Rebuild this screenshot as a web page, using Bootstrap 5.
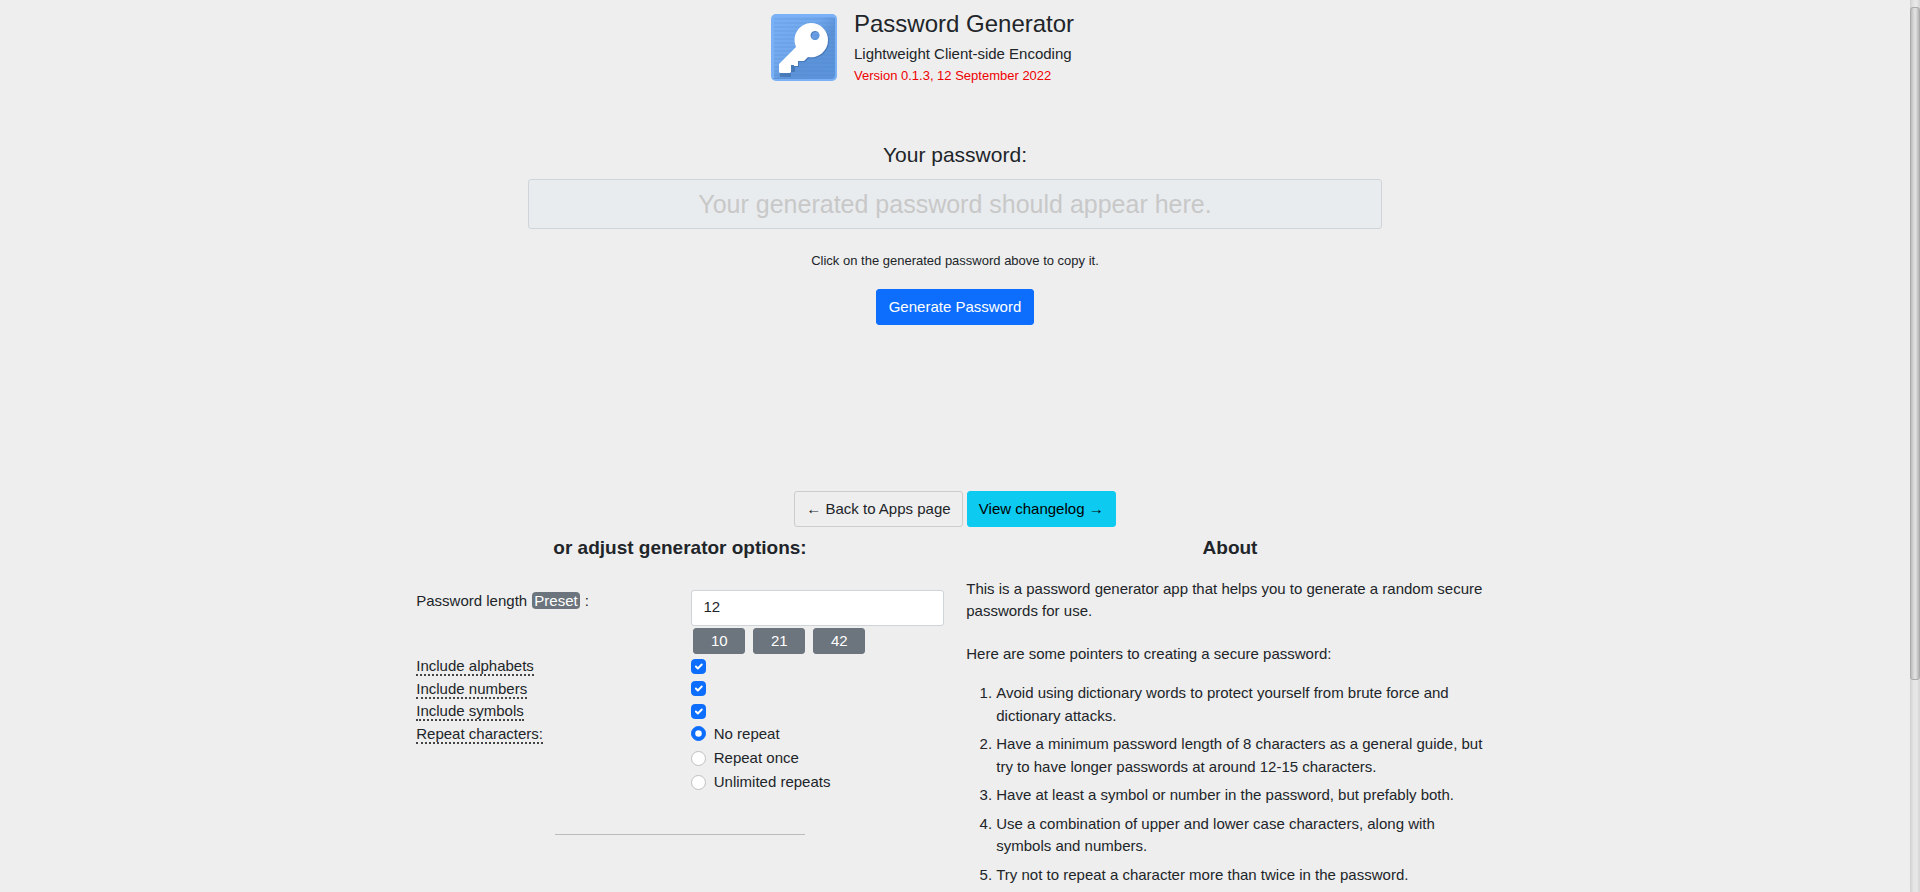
<!DOCTYPE html>
<html lang="en">
<head>
<meta charset="utf-8">
<meta name="viewport" content="width=device-width, initial-scale=1">
<title>Password Generator</title>
<link href="https://cdn.jsdelivr.net/npm/bootstrap@5.3.0/dist/css/bootstrap.min.css" rel="stylesheet">
<style>
  :root { font-size: 15px; }
  body { font-family: "Liberation Sans", Arial, sans-serif; background: #eee; padding-right: 10px; overflow-x: hidden; }
  .btn, .form-control { border-radius: 3px; }
  .form-control { border-color: #ced4da; }
  .form-check-input:not(:checked) { border-color: #bfbfbf; }
  .page-wrap { max-width: 1100px; }
  .app-head { width: 368px; max-width: 100%; gap: 16px; padding-top: 10px; }
  .app-logo { width: 67px; height: 68px; flex: none; margin-top: 4px; }
  .app-title { font-size: 24px; line-height: 28px; margin: 0; }
  .app-sub { line-height: 22px; margin-top: 5px; }
  .app-version { font-size: 13px; line-height: 22px; color: #e00; }
  .pw-area { padding-top: 56px; min-height: 404px; }
  .pw-label { font-size: 21px; line-height: 24px; margin-bottom: 12px; }
  .pw-box { max-width: 854px; height: 50px; font-size: 25px; border-color: #ced4da; }
  .pw-box:disabled, .pw-box[readonly] { background: #e9ecef; }
  .pw-box::placeholder { color: #c8c8c8; opacity: 1; }
  .pw-hint { font-size: 13px; line-height: 20px; margin: 22px 0 18px; }
  .btn-back { border-color: #ccc; color: #212529; }
  .sect-title { font-size: 19px; line-height: 22px; font-weight: 700; text-align: center; margin: 10px 0 0; }
  .options { margin-top: 31px; }
  .tag-preset { background: #6c757d; color: #fff; border-radius: 4px; padding: 0 2px; margin: 0 1px; }
  .preset-row { gap: 8px; padding: 2px 2px 1px; }
  .btn-preset { --bs-btn-padding-y: 1px; width: 52px; }
  .hinted { text-decoration: none; border-bottom: 2px dotted #444; line-height: 16px; display: inline-block; cursor: help; }
  .opt-check { display: block; }
  .short-rule { width: 250px; margin: 38px auto 0; opacity: .25; }
  .about { margin-top: 19px; }
  .about p { margin-bottom: 20px; }
  .about ol { padding-left: 30px; margin-bottom: 0; }
  .about p + ol { margin-top: -3px; }
  .about li { margin-bottom: 6px; }
  .about li:last-child { margin-bottom: 0; }
  .scroll-track { width: 10px; background: linear-gradient(90deg, #d0d0d0, #e4e4e4 35%, #e8e8e8 65%, #d4d4d4); padding-top: 7px; }
  .scroll-thumb { height: 76%; border: 1px solid #aaa; border-radius: 3px; background: linear-gradient(90deg, #bbb, #ddd 40%, #e0e0e0 60%, #b4b4b4); }
</style>
</head>
<body>
<div class="container-fluid page-wrap p-0">
  <header class="app-head d-flex mx-auto">
    <svg class="app-logo" viewBox="0 0 67 68" aria-hidden="true">
      <defs>
        <linearGradient id="face" x1="0" y1="0" x2="1" y2="1"><stop offset="0" stop-color="#78b0f5"/><stop offset=".4" stop-color="#72a9ed"/><stop offset=".6" stop-color="#5c93d8"/><stop offset="1" stop-color="#5b94dc"/></linearGradient>
        <pattern id="stripes" width="4" height="4" patternUnits="userSpaceOnUse"><path d="M0 1h4" stroke="#4a80c4" stroke-opacity=".3"/></pattern>
      </defs>
      <rect x="0" y="0" width="66" height="67" rx="5" fill="#79b0f6"/>
      <path d="M62 4v59H4l-2 2h58q4 0 4-4V4z" fill="#5b91d6"/>
      <rect x="3" y="3" width="60" height="61" rx="2" fill="url(#face)"/>
      <rect x="3" y="3" width="60" height="61" fill="url(#stripes)"/>
      <g fill-rule="evenodd">
        <path transform="translate(1 1)" fill="#3d6da9" opacity=".65" d="M40 9a17 17 0 0 1 17 17a17 17 0 0 1-20 17l-4 4h-6v5h-4v5h-4v5H8V49l17-17A17 17 0 0 1 40 9zM44 17a4.500 4.500 0 1 0 .1 0z"/>
        <path fill="#fff" d="M40 9a17 17 0 0 1 17 17a17 17 0 0 1-20 17l-4 4h-6v5h-4v-1h-3v7l-1 1H9l-1-1V50l17-17A17 17 0 0 1 40 9zM44 17a4.500 4.500 0 1 0 .1 0z"/>
      </g>
    </svg>
    <div>
      <h1 class="app-title">Password Generator</h1>
      <div class="app-sub">Lightweight Client-side Encoding</div>
      <div class="app-version">Version 0.1.3, 12 September 2022</div>
    </div>
  </header>

  <main>
    <section class="pw-area text-center">
      <label class="pw-label d-block" for="password">Your password:</label>
      <input id="password" class="form-control pw-box mx-auto text-center" type="text" placeholder="Your generated password should appear here." readonly>
      <p class="pw-hint">Click on the generated password above to copy it.</p>
      <button type="button" class="btn btn-primary">Generate Password</button>
    </section>

    <nav class="d-flex justify-content-center gap-1">
      <a class="btn btn-back" href="#apps">← Back to Apps page</a>
      <a class="btn btn-info" href="#changelog">View changelog →</a>
    </nav>

    <div class="row mx-0">
      <section class="col-md-6">
        <h2 class="sect-title">or adjust generator options:</h2>
        <form class="options">
          <div class="row">
            <div class="col-6"><label for="length">Password length</label> <span class="tag-preset">Preset</span> :</div>
            <div class="col-6">
              <input id="length" class="form-control" type="text" inputmode="numeric" value="12">
              <div class="preset-row d-flex">
                <button type="button" class="btn btn-secondary btn-preset">10</button>
                <button type="button" class="btn btn-secondary btn-preset">21</button>
                <button type="button" class="btn btn-secondary btn-preset">42</button>
              </div>
            </div>
          </div>
          <div class="row">
            <div class="col-6"><label class="hinted" for="alpha">Include alphabets</label></div>
            <div class="col-6"><input class="form-check-input opt-check" type="checkbox" id="alpha" checked></div>
          </div>
          <div class="row">
            <div class="col-6"><label class="hinted" for="numbers">Include numbers</label></div>
            <div class="col-6"><input class="form-check-input opt-check" type="checkbox" id="numbers" checked></div>
          </div>
          <div class="row">
            <div class="col-6"><label class="hinted" for="symbols">Include symbols</label></div>
            <div class="col-6"><input class="form-check-input opt-check" type="checkbox" id="symbols" checked></div>
          </div>
          <div class="row" role="radiogroup" aria-labelledby="repeat">
            <div class="col-6"><span class="hinted" id="repeat">Repeat characters:</span></div>
            <div class="col-6">
              <div class="form-check"><input class="form-check-input" type="radio" name="rep" id="rep0" checked><label class="form-check-label" for="rep0">No repeat</label></div>
              <div class="form-check"><input class="form-check-input" type="radio" name="rep" id="rep1"><label class="form-check-label" for="rep1">Repeat once</label></div>
              <div class="form-check"><input class="form-check-input" type="radio" name="rep" id="rep2"><label class="form-check-label" for="rep2">Unlimited repeats</label></div>
            </div>
          </div>
        </form>
        <hr class="short-rule">
      </section>
      <section class="col-md-6">
        <h2 class="sect-title">About</h2>
        <div class="about">
          <p>This is a password generator app that helps you to generate a random secure passwords for use.</p>
          <p>Here are some pointers to creating a secure password:</p>
          <ol>
            <li>Avoid using dictionary words to protect yourself from brute force and dictionary attacks.</li>
            <li>Have a minimum password length of 8 characters as a general guide, but try to have longer passwords at around 12-15 characters.</li>
            <li>Have at least a symbol or number in the password, but prefably both.</li>
            <li>Use a combination of upper and lower case characters, along with symbols and numbers.</li>
            <li>Try not to repeat a character more than twice in the password.</li>
          </ol>
        </div>
      </section>
    </div>
  </main>
</div>
<div class="scroll-track position-fixed top-0 end-0 h-100" aria-hidden="true"><div class="scroll-thumb"></div></div>
<script src="https://cdn.jsdelivr.net/npm/bootstrap@5.3.0/dist/js/bootstrap.bundle.min.js"></script>
</body>
</html>
